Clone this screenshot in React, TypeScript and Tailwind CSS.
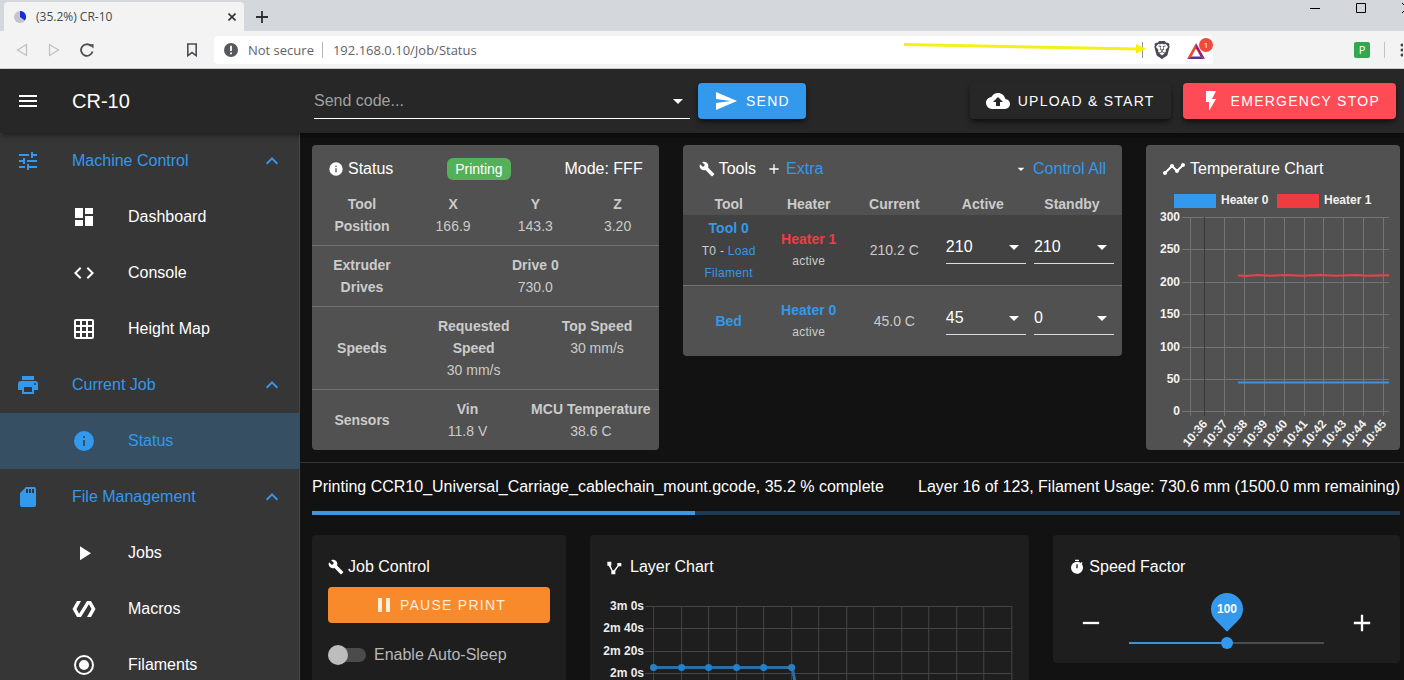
import { useState } from "react";
import type { ReactNode } from "react";
import { SiBrave } from "react-icons/si";

const ICONS = {
  menu: "M3,6H21V8H3V6M3,11H21V13H3V11M3,16H21V18H3V16Z",
  tune: "M3,17V19H9V17H3M3,5V7H13V5H3M13,21V19H21V17H13V15H11V21H13M7,9V11H3V13H7V15H9V9H7M21,13V11H11V13H21M15,9H17V7H21V5H17V3H15V9Z",
  dashboard: "M13,3V9H21V3M13,21H21V11H13M3,21H11V15H3M3,13H11V3H3V13Z",
  code: "M14.6,16.6L19.2,12L14.6,7.4L16,6L22,12L16,18L14.6,16.6M9.4,16.6L4.8,12L9.4,7.4L8,6L2,12L8,18L9.4,16.6Z",
  grid: "M10,4V8H14V4H10M16,4V8H20V4H16M16,10V14H20V10H16M16,16V20H20V16H16M14,20V16H10V20H14M8,20V16H4V20H8M8,14V10H4V14H8M8,8V4H4V8H8M10,14H14V10H10V14M4,2H20A2,2 0 0,1 22,4V20A2,2 0 0,1 20,22H4C2.92,22 2,21.1 2,20V4A2,2 0 0,1 4,2Z",
  printer: "M18,3H6V7H18M19,12A1,1 0 0,1 18,11A1,1 0 0,1 19,10A1,1 0 0,1 20,11A1,1 0 0,1 19,12M16,19H8V14H16M19,8H5A3,3 0 0,0 2,11V17H6V21H18V17H22V11A3,3 0 0,0 19,8Z",
  info: "M13,9H11V7H13M13,17H11V11H13M12,2A10,10 0 0,0 2,12A10,10 0 0,0 12,22A10,10 0 0,0 22,12A10,10 0 0,0 12,2Z",
  sd: "M18,8H16V4H18M15,8H13V4H15M12,8H10V4H12M18,2H10L4,8V20A2,2 0 0,0 6,22H18A2,2 0 0,0 20,20V4A2,2 0 0,0 18,2Z",
  play: "M8,5.14V19.14L19,12.14L8,5.14Z",
  polymer: "M19,4H15L7.1,16.63L4.5,12L9,4H5L0.5,12L5,20H9L16.89,7.37L19.5,12L15,20H19L23.5,12L19,4Z",
  radio: "M12,20A8,8 0 0,1 4,12A8,8 0 0,1 12,4A8,8 0 0,1 20,12A8,8 0 0,1 12,20M12,2A10,10 0 0,0 2,12A10,10 0 0,0 12,22A10,10 0 0,0 22,12A10,10 0 0,0 12,2M12,7A5,5 0 0,0 7,12A5,5 0 0,0 12,17A5,5 0 0,0 17,12A5,5 0 0,0 12,7Z",
  chevronUp: "M7.41,15.41L12,10.83L16.59,15.41L18,14L12,8L6,14L7.41,15.41Z",
  send: "M2,21L23,12L2,3V10L17,12L2,14V21Z",
  cloudUpload: "M14,13V17H10V13H7L12,8L17,13M19.35,10.03C18.67,6.59 15.64,4 12,4C9.11,4 6.6,5.64 5.35,8.03C2.34,8.36 0,10.9 0,14A6,6 0 0,0 6,20H19A5,5 0 0,0 24,15C24,12.36 21.95,10.22 19.35,10.03Z",
  flash: "M7,2V13H10V22L17,10H13L17,2H7Z",
  wrench: "M22.7,19L13.6,9.9C14.5,7.6 14,4.9 12.1,3C10.1,1 7.1,0.6 4.7,1.7L9,6L6,9L1.6,4.7C0.4,7.1 0.9,10.1 2.9,12.1C4.8,14 7.5,14.5 9.8,13.6L18.9,22.7C19.3,23.1 19.9,23.1 20.3,22.7L22.6,20.4C23.1,20 23.1,19.3 22.7,19Z",
  plus: "M19,13H13V19H11V13H5V11H11V5H13V11H19V13Z",
  minus: "M19,13H5V11H19V13Z",
  menuDown: "M7,10L12,15L17,10H7Z",
  timeline: "M23,8c0,1.1-0.9,2-2,2c-0.18,0-0.35-0.02-0.51-0.07l-3.56,3.55C16.98,13.64,17,13.82,17,14c0,1.1-0.9,2-2,2s-2-0.9-2-2c0-0.18,0.02-0.36,0.07-0.52l-2.55-2.55C10.36,10.98,10.18,11,10,11s-0.36-0.02-0.52-0.07l-4.55,4.56C4.98,15.65,5,15.82,5,16c0,1.1-0.9,2-2,2s-2-0.9-2-2s0.9-2,2-2c0.18,0,0.35,0.02,0.51,0.07l4.56-4.55C8.02,9.36,8,9.18,8,9c0-1.1,0.9-2,2-2s2,0.9,2,2c0,0.18-0.02,0.36-0.07,0.52l2.55,2.55C14.64,12.02,14.82,12,15,12s0.36,0.02,0.52,0.07l3.55-3.56C19.02,8.35,19,8.18,19,8c0-1.1,0.9-2,2-2S23,6.9,23,8z",
  polyline: "M2,4H8V10H7L10,17H12L17,10V6H23V11H19L14,18V23H8V17L4,10H2Z",
  timer: "M15,1H9V3H15V1M19.03,7.39L20.45,5.97C20,5.46 19.55,5 19.04,4.56L17.62,6C16.07,4.74 14.12,4 12,4A9,9 0 0,0 3,13A9,9 0 0,0 12,22C17,22 21,17.97 21,13C21,10.88 20.26,8.93 19.03,7.39M13,14H11V8H13V14Z",
  pause: "M14,19H18V5H14M6,19H10V5H6V19Z",
};

type IconName = keyof typeof ICONS;

function Icon({ name, className = "size-6" }: { name: IconName; className?: string }) {
  return (
    <svg viewBox="0 0 24 24" fill="currentColor" aria-hidden="true" className={"shrink-0 " + className}>
      <path d={ICONS[name]} />
    </svg>
  );
}

function BrowserBar() {
  return (
    <div className="shrink-0 font-['Open_Sans',sans-serif]">
      <div className="flex h-[31px] items-end justify-between overflow-hidden bg-[#d4d8dc] pl-1">
        <div className="flex items-end">
          <div className="flex h-[29px] w-60 items-center rounded-t bg-[#f3f3f4] pr-2 pl-2.5 text-[#45484b]">
            <svg viewBox="0 0 12 12" className="mr-2.5 size-3">
              <circle cx="6" cy="6" r="6" fill="#c3c5cb" />
              <path d="M6 6V0A6 6 0 0 1 10.8 9.6Z" fill="#1a2bd8" />
            </svg>
            <span className="flex-1 text-xs">(35.2%) CR-10</span>
            <button aria-label="Close tab">
              <svg viewBox="0 0 8 8" className="size-2" stroke="#333" strokeWidth="1.6">
                <path d="M0.5 0.5L7.5 7.5M7.5 0.5L0.5 7.5" />
              </svg>
            </button>
          </div>
          <button aria-label="New tab" className="mb-2 ml-3">
            <svg viewBox="0 0 12 12" className="size-3" stroke="#2d3033" strokeWidth="1.8">
              <path d="M6 0V12M0 6H12" />
            </svg>
          </button>
        </div>
        <div className="-mr-2 flex items-center gap-9 self-start pt-[3px] text-black">
          <button aria-label="Minimize">
            <svg viewBox="0 0 10 10" className="size-2.5" stroke="currentColor" fill="none">
              <path d="M0 5.5H10" />
            </svg>
          </button>
          <button aria-label="Maximize">
            <svg viewBox="0 0 10 10" className="size-2.5" stroke="currentColor" fill="none">
              <path d="M0.5 0.5H9.5V9.5H0.5Z" />
            </svg>
          </button>
          <button aria-label="Close">
            <svg viewBox="0 0 10 10" className="size-2.5" stroke="currentColor" fill="none">
              <path d="M0 0L10 10M10 0L0 10" />
            </svg>
          </button>
        </div>
      </div>

      <div className="flex h-[38px] items-center overflow-hidden border-b border-[#d0d0d0] bg-[#f3f3f4]">
        <div className="flex w-[214px] shrink-0 items-center justify-between pr-4 pl-4">
          <div className="flex items-center gap-5">
            <button aria-label="Back">
              <svg viewBox="0 0 12 14" className="h-3.5 w-3" fill="none" stroke="#bcbec0" strokeWidth="1.2">
                <path d="M10.5 1.5V12.5L1.5 7Z" />
              </svg>
            </button>
            <button aria-label="Forward">
              <svg viewBox="0 0 12 14" className="h-3.5 w-3" fill="none" stroke="#bcbec0" strokeWidth="1.2">
                <path d="M1.5 1.5V12.5L10.5 7Z" />
              </svg>
            </button>
            <button aria-label="Reload">
              <svg viewBox="0 0 14 14" className="size-3.5" fill="none" stroke="#4b4d50" strokeWidth="1.8">
                <path d="M12.5 8.5A5.8 5.8 0 1 1 11 3" />
                <path d="M9 1.5L13.5 1V5.5Z" fill="#4b4d50" stroke="none" />
              </svg>
            </button>
          </div>
          <button aria-label="Bookmark">
            <svg viewBox="0 0 12 14" className="h-3.5 w-3" fill="none" stroke="#4b4d50" strokeWidth="1.6">
              <path d="M1.8 1H10.2V12.6L6 9.6L1.8 12.6Z" />
            </svg>
          </button>
        </div>

        <div className="relative flex h-7 flex-1 items-center rounded bg-white pl-2.5 text-[13px] text-[#5f6368]">
          <svg viewBox="0 0 14 14" className="size-3.5">
            <circle cx="7" cy="7" r="7" fill="#55585c" />
            <path d="M7 2.8V8M7 9.4V11.2" stroke="#fff" strokeWidth="1.8" />
          </svg>
          <span className="ml-2.5">Not secure</span>
          <span className="mr-2.5 ml-2 h-4 w-px bg-[#b4b6b9]" />
          <input
            aria-label="Address"
            defaultValue="192.168.0.10/Job/Status"
            className="min-w-0 flex-1 bg-transparent outline-none"
          />
          <span className="h-4 w-px bg-[#8d9094]" />
          <button aria-label="Shields" className="ml-2.5 text-[#4a4c55]">
            <SiBrave className="size-[18px]" />
          </button>
          <button aria-label="Rewards" className="relative ml-4 h-5 w-[26px]">
            <svg viewBox="0 0 18 16" className="mt-0.5 h-4 w-[18px]">
              <path d="M9 0L0 16L4.6 13.4L9 5.6Z" fill="#ef4a2e" />
              <path d="M9 0L18 16L13.4 13.4L9 5.6Z" fill="#9e2068" />
              <path d="M0 16H18L13.4 13.4H4.6Z" fill="#5d2f91" />
            </svg>
            <span className="absolute -top-0.5 right-0 flex size-3.5 items-center justify-center rounded-full bg-[#f04a3c] text-[8px] text-white">
              1
            </span>
          </button>
          <svg viewBox="0 0 242 14" className="absolute top-1 right-[67px] h-3.5 w-[242px]">
            <path d="M0 4.5L234 9" stroke="#f5f01c" strokeWidth="3" />
            <path d="M232 4V13.5L242 9Z" fill="#f7f200" />
          </svg>
        </div>

        <div className="flex w-[191px] shrink-0 items-center justify-end gap-3.5">
          <button
            aria-label="Extension"
            className="flex size-4 items-center justify-center rounded-xs bg-[#2fa84f] text-[11px] text-white"
          >
            P
          </button>
          <span className="h-4 w-px bg-[#c0c2c4]" />
          <button aria-label="Browser menu" className="mr-px">
            <svg viewBox="0 0 4 14" className="h-3.5 w-1" fill="#444">
              <circle cx="3" cy="2" r="1.5" />
              <circle cx="3" cy="7" r="1.5" />
              <circle cx="3" cy="12" r="1.5" />
            </svg>
          </button>
        </div>
      </div>
    </div>
  );
}

function AppBar() {
  const btn = "flex h-9 items-center gap-2 rounded px-4 text-sm tracking-[0.09em] text-white shadow-md shadow-black/50 ";
  return (
    <header className="z-10 flex h-16 shrink-0 items-center bg-[#272727] pr-2 pl-4 shadow-md shadow-black/30">
      <button aria-label="Toggle menu">
        <Icon name="menu" />
      </button>
      <h1 className="ml-8 w-[242px] shrink-0 text-xl">CR-10</h1>
      <div className="flex h-9 w-94 items-center border-b border-white">
        <input
          aria-label="Send code"
          placeholder="Send code..."
          className="min-w-0 flex-1 bg-transparent outline-none placeholder:text-[#a0a0a0]"
        />
        <button aria-label="Show recent codes">
          <Icon name="menuDown" />
        </button>
      </div>
      <button className={btn + "ml-2 bg-[#3399ec]"}>
        <Icon name="send" />
        SEND
      </button>
      <div className="ml-auto flex gap-3">
        <button className={btn + "bg-[#272727]"}>
          <Icon name="cloudUpload" />
          UPLOAD &amp; START
        </button>
        <button className={btn + "bg-[#ff4b55]"}>
          <Icon name="flash" />
          EMERGENCY STOP
        </button>
      </div>
    </header>
  );
}

const MENU: { title: string; icon: IconName; pages: { title: string; icon: IconName; active?: boolean }[] }[] = [
  {
    title: "Machine Control",
    icon: "tune",
    pages: [
      { title: "Dashboard", icon: "dashboard" },
      { title: "Console", icon: "code" },
      { title: "Height Map", icon: "grid" },
    ],
  },
  {
    title: "Current Job",
    icon: "printer",
    pages: [{ title: "Status", icon: "info", active: true }],
  },
  {
    title: "File Management",
    icon: "sd",
    pages: [
      { title: "Jobs", icon: "play" },
      { title: "Macros", icon: "polymer" },
      { title: "Filaments", icon: "radio" },
    ],
  },
];

function Sidebar() {
  return (
    <nav className="w-[300px] shrink-0 overflow-hidden border-r border-[#484848] bg-[#363636]">
      {MENU.map((group) => (
        <div key={group.title}>
          <button className="flex h-14 w-full items-center pr-[15px] pl-4 text-left text-[#3399ec]">
            <Icon name={group.icon} />
            <span className="ml-8 flex-1">{group.title}</span>
            <Icon name="chevronUp" />
          </button>
          {group.pages.map((page) => (
            <a
              key={page.title}
              href="#"
              className={
                "flex h-14 items-center gap-8 pl-18 " + (page.active ? "bg-[#364f63] text-[#3399ec]" : "text-white")
              }
            >
              <Icon name={page.icon} />
              {page.title}
            </a>
          ))}
        </div>
      ))}
    </nav>
  );
}

function StatusRow({ label, values }: { label: string; values: [string, string][] }) {
  return (
    <div className="flex items-center border-t border-[#737373] py-2 first:border-t-0 first:pt-0">
      <strong className="w-25 shrink-0 px-4 text-center">{label}</strong>
      <div className="flex flex-1 items-start">
        {values.map(([name, value]) => (
          <div key={name} className="flex flex-1 flex-col px-2 text-center">
            <strong className={name.startsWith("MCU") ? "whitespace-nowrap" : ""}>{name}</strong>
            <span>{value}</span>
          </div>
        ))}
      </div>
    </div>
  );
}

function StatusPanel() {
  return (
    <section className="col-span-4 rounded bg-[#515151]">
      <div className="flex h-12 items-center justify-between px-4">
        <h2 className="flex items-center gap-1">
          <Icon name="info" className="size-4" />
          Status
        </h2>
        <span className="rounded-md bg-[#55b05a] px-2 text-sm leading-[22px]">Printing</span>
        <span>Mode: FFF</span>
      </div>
      <div className="text-sm leading-[22px] text-[#cbcbcb]">
        <StatusRow label="Tool Position" values={[["X", "166.9"], ["Y", "143.3"], ["Z", "3.20"]]} />
        <StatusRow label="Extruder Drives" values={[["Drive 0", "730.0"]]} />
        <StatusRow label="Speeds" values={[["Requested Speed", "30 mm/s"], ["Top Speed", "30 mm/s"]]} />
        <StatusRow label="Sensors" values={[["Vin", "11.8 V"], ["MCU Temperature", "38.6 C"]]} />
      </div>
    </section>
  );
}

function TempSelect({ label, value }: { label: string; value: string }) {
  return (
    <div className="relative">
      <select
        aria-label={label}
        defaultValue={value}
        className="h-9 w-full appearance-none border-b border-[#dcdcdc] bg-transparent pt-1 text-base text-white outline-none"
      >
        <option>{value}</option>
      </select>
      <Icon name="menuDown" className="pointer-events-none absolute top-[7px] right-0 size-6 text-white" />
    </div>
  );
}

function HeaterRow({
  tool,
  heater,
  heaterColor,
  current,
  active,
  standby,
  rowClass,
}: {
  tool: ReactNode;
  heater: string;
  heaterColor: string;
  current: string;
  active: string;
  standby: string;
  rowClass: string;
}) {
  return (
    <tr className={rowClass}>
      <td className="pl-1.5">{tool}</td>
      <td>
        <a href="#" className={"block font-bold " + heaterColor}>
          {heater}
        </a>
        <span className="block text-xs leading-[22px] tracking-wide">active</span>
      </td>
      <td>{current}</td>
      <td className="pb-2 pl-1.5">
        <TempSelect label={heater + " active temperature"} value={active} />
      </td>
      <td className="px-2 pb-2">
        <TempSelect label={heater + " standby temperature"} value={standby} />
      </td>
    </tr>
  );
}

function ToolsPanel() {
  return (
    <section className="col-span-5 self-start overflow-hidden rounded bg-[#515151]">
      <div className="flex h-12 items-center px-4">
        <h2 className="flex items-center gap-1">
          <Icon name="wrench" className="size-4" />
          Tools
        </h2>
        <a href="#" className="ml-2.5 flex items-center gap-1 text-[#3399ec]">
          <Icon name="plus" className="size-4 text-white" />
          Extra
        </a>
        <a href="#" className="ml-auto flex items-center gap-1 text-[#3399ec]">
          <Icon name="menuDown" className="size-4 text-white" />
          Control All
        </a>
      </div>
      <table className="w-full table-fixed text-center text-sm leading-[22px] text-[#cbcbcb]">
        <colgroup>
          <col className="w-[86px]" />
          <col className="w-20" />
          <col className="w-[91px]" />
          <col className="w-[86px]" />
          <col className="w-24" />
        </colgroup>
        <thead>
          <tr>
            <th className="pl-1.5">Tool</th>
            <th>Heater</th>
            <th>Current</th>
            <th>Active</th>
            <th className="pr-1">Standby</th>
          </tr>
        </thead>
        <tbody>
          <HeaterRow
            tool={
              <>
                <a href="#" className="block font-bold text-[#3399ec]">
                  Tool 0
                </a>
                <span className="text-xs tracking-wide">T0 - </span>
                <a href="#" className="text-xs tracking-wide text-[#3399ec]">
                  Load Filament
                </a>
              </>
            }
            heater="Heater 1"
            heaterColor="text-[#f03c42]"
            current="210.2 C"
            active="210"
            standby="210"
            rowClass="h-[70px] bg-[#424242]"
          />
          <HeaterRow
            tool={
              <a href="#" className="font-bold text-[#3399ec]">
                Bed
              </a>
            }
            heater="Heater 0"
            heaterColor="text-[#3399ec]"
            current="45.0 C"
            active="45"
            standby="0"
            rowClass="h-[71px] border-t border-[#737373]"
          />
        </tbody>
      </table>
    </section>
  );
}

const TEMP_TICKS = [300, 250, 200, 150, 100, 50, 0];
const TIME_TICKS = ["10:36", "10:37", "10:38", "10:39", "10:40", "10:41", "10:42", "10:43", "10:44", "10:45"];

function TemperatureChart() {
  return (
    <section className="col-span-3 rounded bg-[#515151]">
      <h2 className="flex h-12 items-center gap-1 px-4">
        <Icon name="timeline" />
        Temperature Chart
      </h2>
      <svg viewBox="0 0 254 257" className="w-full text-xs font-bold" fill="#f2f2f2">
        <rect x="28" y="1" width="42" height="14" fill="#3399ec" />
        <text x="75" y="11">Heater 0</text>
        <rect x="131" y="1" width="42" height="14" fill="#f03c3f" />
        <text x="178" y="11">Heater 1</text>
        {TEMP_TICKS.map((t, i) => {
          const y = 24.5 + Math.round(i * 32.4);
          return (
            <g key={t}>
              <path d={`M36 ${y}H243`} stroke="#747474" />
              <text x="34" y={y + 3} textAnchor="end">
                {t}
              </text>
            </g>
          );
        })}
        <path d="M44.5 24V223" stroke="#747474" />
        {TIME_TICKS.map((t, i) => {
          const x = 58.5 + Math.round(i * 19.9);
          return (
            <g key={t}>
              <path d={`M${x} 24V223`} stroke={i === 0 ? "#3a3a3a" : "#747474"} />
              <text x={x + 1} y="229" textAnchor="end" dominantBaseline="middle" transform={`rotate(-50 ${x + 1} 229)`}>
                {t}
              </text>
            </g>
          );
        })}
        <path
          d="M92 82.5L100 83L112 82L124 82.8L140 82L155 82.8L175 82L190 82.8L210 82L222 82.8L243 82.3"
          fill="none"
          stroke="#e8424c"
          strokeWidth="2"
        />
        <path d="M92 189.5H243" stroke="#3d94dc" strokeWidth="2" />
      </svg>
    </section>
  );
}

function JobProgress({ percent }: { percent: number }) {
  return (
    <div className="mt-3 border-t border-[#333] pt-3">
      <div className="mr-1 ml-3">
        <div className="flex justify-between whitespace-nowrap">
          <span>Printing CCR10_Universal_Carriage_cablechain_mount.gcode, {percent} % complete</span>
          <span>Layer 16 of 123, Filament Usage: 730.6 mm (1500.0 mm remaining)</span>
        </div>
        <div
          role="progressbar"
          aria-label="Job progress"
          aria-valuenow={percent}
          aria-valuemin={0}
          aria-valuemax={100}
          className="mt-3 h-1 bg-[#1f3a50]"
        >
          <div className="h-full bg-[#4296dc]" style={{ width: `${percent}%` }} />
        </div>
      </div>
    </div>
  );
}

function JobControl() {
  const [autoSleep, setAutoSleep] = useState(false);
  return (
    <section className="col-span-3 rounded bg-[#1e1e1e] px-4 pb-4">
      <h2 className="flex items-center gap-1 pt-5 pb-2">
        <Icon name="wrench" className="size-4" />
        Job Control
      </h2>
      <button className="flex h-9 w-full items-center justify-center gap-1 rounded bg-[#f88a2b] text-sm tracking-[0.09em] text-[#fdeedd]">
        <Icon name="pause" />
        PAUSE PRINT
      </button>
      <label className="mt-5 flex items-center gap-2 text-[#b8b8b8]">
        <input
          type="checkbox"
          role="switch"
          checked={autoSleep}
          onChange={(e) => setAutoSleep(e.target.checked)}
          className="relative h-3.5 w-[38px] appearance-none rounded-full bg-[#4b4b4b] before:absolute before:-top-[3px] before:left-0 before:size-5 before:rounded-full before:bg-[#bdbdbd] checked:before:left-[18px] checked:before:bg-[#3399ec]"
        />
        Enable Auto-Sleep
      </label>
    </section>
  );
}

const LAYER_TICKS = ["3m 0s", "2m 40s", "2m 20s", "2m 0s"];
const LAYER_COLUMNS = Array.from({ length: 14 }, (_, i) => 63.5 + Math.round(i * 27.5));

function LayerChart() {
  return (
    <section className="col-span-5 rounded bg-[#1e1e1e]">
      <h2 className="flex items-center gap-2 px-4 pt-5 pb-2">
        <Icon name="polyline" className="size-4" />
        Layer Chart
      </h2>
      <svg viewBox="0 0 439 120" className="w-full text-xs font-bold" fill="#ececec">
        {LAYER_TICKS.map((t, i) => {
          const y = 19.5 + Math.round(i * 22.3);
          return (
            <g key={t}>
              <path d={`M55 ${y}H421`} stroke="#454545" />
              <text x="54" y={y + 3} textAnchor="end">
                {t}
              </text>
            </g>
          );
        })}
        {LAYER_COLUMNS.map((x) => (
          <path key={x} d={`M${x} 19V120`} stroke="#454545" />
        ))}
        <path d="M64 80.5H202L210 120" fill="none" stroke="#2b6ea6" strokeWidth="3" />
        {LAYER_COLUMNS.slice(0, 6).map((x) => (
          <circle key={x} cx={x} cy="80.5" r="3.5" fill="#2a7fc4" />
        ))}
      </svg>
    </section>
  );
}

function SpeedFactor() {
  const [speed, setSpeed] = useState(100);
  return (
    <section className="col-span-4 self-start rounded bg-[#1e1e1e] pb-3.5">
      <h2 className="flex items-center gap-1 px-4 pt-5 pb-1">
        <Icon name="timer" className="size-4" />
        Speed Factor
      </h2>
      <div className="flex h-[66px] items-end justify-between px-5">
        <button aria-label="Decrease" className="mb-2" onClick={() => setSpeed(speed - 5)}>
          <Icon name="minus" className="size-9 p-1" />
        </button>
        <div className="relative mx-5 flex flex-1 items-center">
          <input
            type="range"
            aria-label="Speed factor"
            min={0}
            max={200}
            value={speed}
            onChange={(e) => setSpeed(Number(e.target.value))}
            className="h-3 w-full appearance-none bg-transparent [&::-webkit-slider-runnable-track]:h-0.5 [&::-webkit-slider-runnable-track]:bg-linear-to-r [&::-webkit-slider-runnable-track]:from-[#3b93dc] [&::-webkit-slider-runnable-track]:from-50% [&::-webkit-slider-runnable-track]:to-[#4c4c4c] [&::-webkit-slider-runnable-track]:to-50% [&::-webkit-slider-thumb]:-mt-[5px] [&::-webkit-slider-thumb]:size-3 [&::-webkit-slider-thumb]:appearance-none [&::-webkit-slider-thumb]:rounded-full [&::-webkit-slider-thumb]:bg-[#3399ec]"
          />
          <div className="pointer-events-none absolute inset-x-0 bottom-6 flex justify-center">
            <div className="flex size-8 rotate-45 items-center justify-center rounded-full rounded-br-none bg-[#3399ec]">
              <span className="-rotate-45 text-xs font-bold">{speed}</span>
            </div>
          </div>
        </div>
        <button aria-label="Increase" className="mb-2" onClick={() => setSpeed(speed + 5)}>
          <Icon name="plus" className="size-9 p-1" />
        </button>
      </div>
    </section>
  );
}

export default function App() {
  return (
    <div className="flex h-screen flex-col overflow-hidden bg-[#121212] font-['Liberation_Sans',Arial,sans-serif] text-base leading-6 text-white">
      <BrowserBar />
      <AppBar />
      <div className="flex min-h-0 flex-1">
        <Sidebar />
        <main className="min-w-0 flex-1 overflow-hidden pt-3">
          <div className="mr-1 ml-3 grid grid-cols-12 gap-6">
            <StatusPanel />
            <ToolsPanel />
            <TemperatureChart />
          </div>
          <JobProgress percent={35.2} />
          <div className="mt-5 mr-1 ml-3 grid grid-cols-12 gap-6">
            <JobControl />
            <LayerChart />
            <SpeedFactor />
          </div>
        </main>
      </div>
    </div>
  );
}
